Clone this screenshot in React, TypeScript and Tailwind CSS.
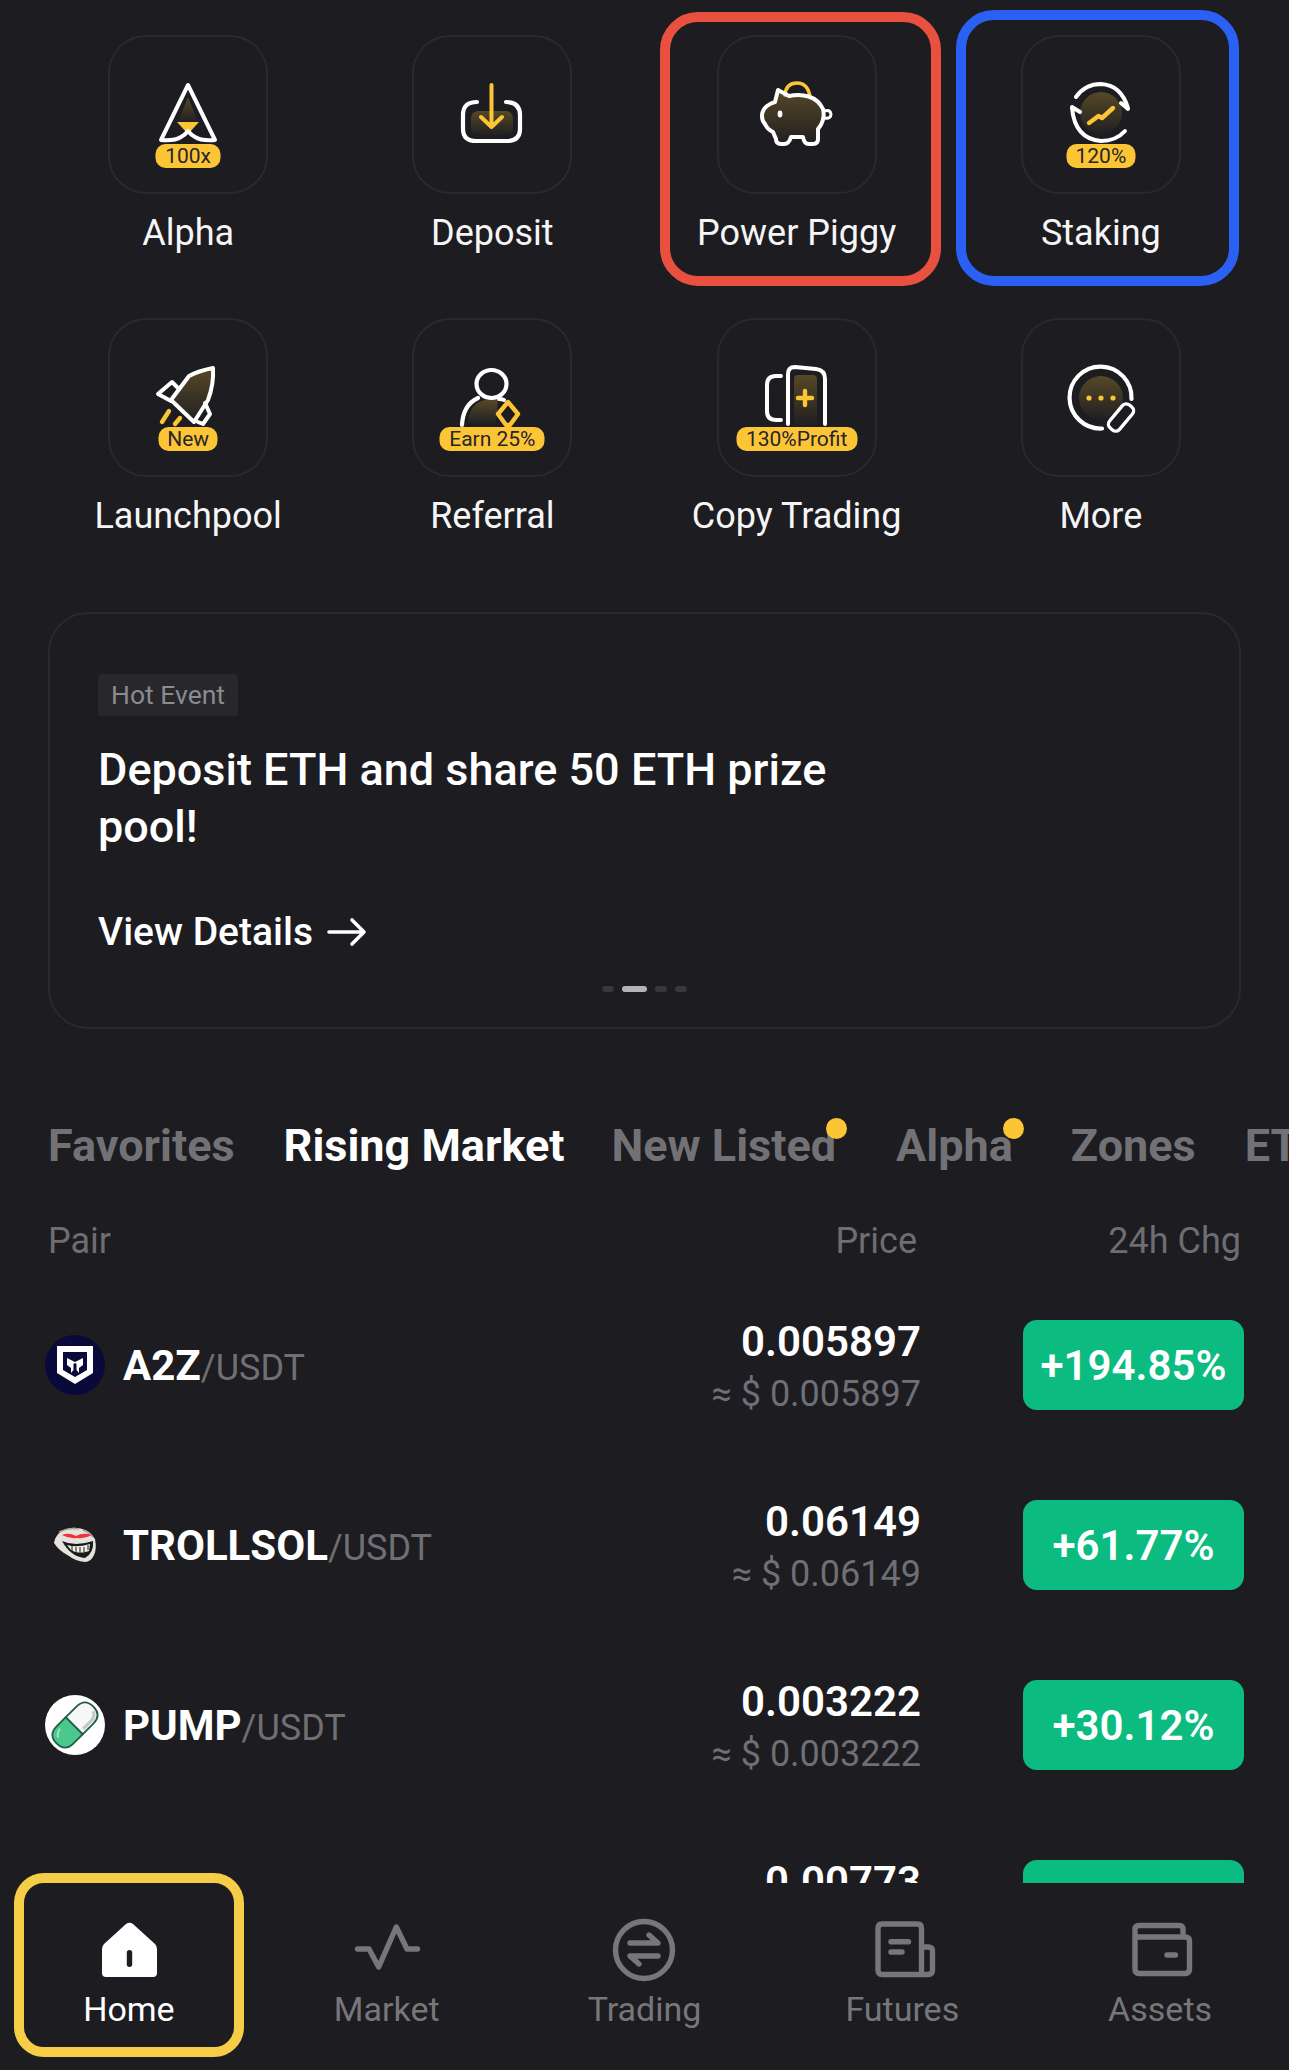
import React from 'react';

const YELLOW = '#fcc536';

const glow = (id: string) => (
  <defs>
    <linearGradient id={id} x1="0" y1="0" x2="0" y2="1">
      <stop offset="0%" stopColor="#fcc536" stopOpacity={0.26} />
      <stop offset="100%" stopColor="#fcc536" stopOpacity={0.02} />
    </linearGradient>
  </defs>
);

const Icon: React.FC<{ children: React.ReactNode }> = ({ children }) => (
  <svg viewBox="0 0 80 80" fill="none" strokeLinecap="round" strokeLinejoin="round" className="w-[80px] h-[80px]">
    {children}
  </svg>
);

const AlphaIcon = () => (
  <Icon>
    {glow('g-alpha')}
    <path d="M40 22 L30 47 H50 Z" fill="url(#g-alpha)" />
    <path d="M29 47 H51 L41 58 H39 Z" fill={YELLOW} />
    <path d="M40 10 L13 65 Q27 66 33 62 Q37 60 40 56 Q43 60 47 62 Q53 66 67 65 Z" stroke="#fff" strokeWidth={4} />
  </Icon>
);

const DepositIcon = () => (
  <Icon>
    {glow('g-dep')}
    <rect x="19" y="36" width="42" height="24" rx="7" fill="url(#g-dep)" />
    <path d="M25 27 Q11 27 11 40 V54 Q11 66 24 66 H55 Q68 66 68 54 V40 Q68 27 54 27" stroke="#fff" strokeWidth={4.2} />
    <path d="M39.5 10 V52 M29 42 L39.5 52 L50 42" stroke={YELLOW} strokeWidth={4} />
  </Icon>
);

const PiggyIcon = () => (
  <Icon>
    {glow('g-pig')}
    <path d="M28 20 Q29 8 40 8 Q51 8 53 22" stroke={YELLOW} strokeWidth={3.6} />
    <path d="M21 15 L32 21 C45 18 60 21 66 34 C68 42 65 50 61 54 V64 Q61 69 56 69 H52 Q47 69 46 62 H34 Q32 69 27 69 H24 Q19 69 19 64 L16 57 Q10 54 8 49 Q5 46 5 41 Q5 35 10 31 Q14 28 18 27 Z" fill="url(#g-pig)" stroke="#fff" strokeWidth={4} />
    <path d="M67 36 Q73 34 74 39 Q74 44 68 43" stroke="#fff" strokeWidth={3} />
    <ellipse cx="23" cy="39" rx="2.4" ry="3.4" fill="#fff" />
  </Icon>
);

const StakingIcon = () => (
  <Icon>
    {glow('g-stk')}
    <circle cx="40" cy="38" r="21" fill="url(#g-stk)" />
    <path d="M15 22 Q24 9 40 9 Q60 10 67 33 M67 34 L60 28" stroke="#fff" strokeWidth={4} />
    <path d="M64 56 Q55 66 40 66 Q14 64 11 33 M11 32 L19 37" stroke="#fff" strokeWidth={4} />
    <path d="M28 48 L37.5 41 L41 43 L52 33" stroke={YELLOW} strokeWidth={4.4} />
  </Icon>
);

const RocketIcon = () => (
  <Icon>
    {glow('g-rkt')}
    <path d="M65 10 L40 18 L23 42 L46 65 L60 41 Z" fill="url(#g-rkt)" />
    <path d="M65 10 Q50 13 41 18 L23 42 L46 64 L60 42 Q66 26 65 10 Z" stroke="#fff" strokeWidth={4} />
    <path d="M31 31 L24 24 L10 36 L23 43" stroke="#fff" strokeWidth={4} />
    <path d="M57 45 L62 56 L55 66 L50 64" stroke="#fff" strokeWidth={4} />
    <path d="M21 53 L14 64 M32 60 L27 66" stroke={YELLOW} strokeWidth={4.4} />
  </Icon>
);

const ReferralIcon = () => (
  <Icon>
    {glow('g-ref')}
    <path d="M16 66 Q17 44 34 42 H46 L44 66 Z" fill="url(#g-ref)" />
    <ellipse cx="39.5" cy="26" rx="15" ry="14" stroke="#fff" strokeWidth={4.2} />
    <path d="M10 67 Q11 47 26 40" stroke="#fff" strokeWidth={4.2} />
    <path d="M47 41 Q50 41 52 42" stroke="#fff" strokeWidth={4} />
    <path d="M56 44 L66 56 L58 67 H54 L46 56 Z" stroke={YELLOW} strokeWidth={4.4} fill="#1c1c21" />
  </Icon>
);

const CopyIcon = () => (
  <Icon>
    {glow('g-cpy')}
    <rect x="37" y="17" width="23" height="50" rx="4" fill="url(#g-cpy)" />
    <path d="M24 18 H19 Q10 18 10 27 V53 Q10 62 19 62 H24" stroke="#fff" strokeWidth={4} />
    <path d="M31 66 V16 Q31 9 38 9 L59 11 Q68 12 68 21 V66" stroke="#fff" strokeWidth={4} />
    <path d="M48 33 V47 M41 40 H55" stroke={YELLOW} strokeWidth={4.4} />
  </Icon>
);

const MoreIcon = () => (
  <Icon>
    {glow('g-more')}
    <circle cx="40" cy="40" r="22" fill="url(#g-more)" />
    <path d="M70.5 41 A31 31 0 1 0 41 70.5" stroke="#fff" strokeWidth={4.2} />
    <circle cx="28" cy="40" r="2.6" fill={YELLOW} />
    <circle cx="40" cy="40" r="2.6" fill={YELLOW} />
    <circle cx="52" cy="40" r="2.6" fill={YELLOW} />
    <rect x="45" y="53" width="30" height="13" rx="5" transform="rotate(-50 60 59.5)" fill="#1c1c21" stroke="#fff" strokeWidth={3.4} />
  </Icon>
);

const tiles = [
  { label: 'Alpha', icon: <AlphaIcon />, badge: '100x', badgeW: 'w-[65px]' },
  { label: 'Deposit', icon: <DepositIcon /> },
  { label: 'Power Piggy', icon: <PiggyIcon />, ring: 'red' },
  { label: 'Staking', icon: <StakingIcon />, badge: '120%', badgeW: 'w-[69px]', ring: 'blue' },
  { label: 'Launchpool', icon: <RocketIcon />, badge: 'New', badgeW: 'w-[59px]' },
  { label: 'Referral', icon: <ReferralIcon />, badge: 'Earn 25%', badgeW: 'w-[105px]' },
  { label: 'Copy Trading', icon: <CopyIcon />, badge: '130%Profit', badgeW: 'w-[121px]' },
  { label: 'More', icon: <MoreIcon /> },
];

const A2zLogo = () => (
  <svg viewBox="0 0 60 60" className="w-[60px] h-[60px] shrink-0">
    <circle cx="30" cy="30" r="30" fill="#0a0a3a" />
    <path d="M12 11 H48 V38 L30 49 L12 38 Z" fill="#fff" />
    <path d="M18 17 H42 V35 L30 42 L18 35 Z" fill="#0a0a3a" />
    <path d="M22 23 L30 27 L38 23 V30 L34 33 V38 L31.5 35 V29 L30 28 L28.5 29 V35 L26 38 V33 L22 30 Z" fill="#fff" />
  </svg>
);

const TrollLogo = () => (
  <svg viewBox="0 0 60 60" className="w-[60px] h-[60px] shrink-0">
    <path d="M9 28 Q11 16 25 13 Q42 11 50 24 Q52 34 49 40 Q46 47 40 47 Q30 46 24 41 Q14 36 9 28 Z" fill="#e6e3de" />
    <path d="M14 17 Q24 12 34 14 M38 15 Q44 17 48 22" stroke="#a7a39d" strokeWidth={1.4} fill="none" />
    <path d="M17 20 Q24 17 31 21 Q38 17 47 20 Q40 24 32 23 Q24 24 17 20 Z" fill="#f0323a" />
    <path d="M17 26 Q30 32 48 26 Q49 38 40 43 Q26 42 17 26 Z" fill="#1a1a1a" />
    <path d="M22 30 Q32 33 45 29 L44 36 Q33 40 26 35 Z" fill="#f2f0ec" />
    <path d="M27 31 V36 M31 32 V38 M35 32 V38 M39 32 V37 M43 30 V35" stroke="#1a1a1a" strokeWidth={1} />
  </svg>
);

const PumpLogo = () => (
  <svg viewBox="0 0 60 60" className="w-[60px] h-[60px] shrink-0">
    <circle cx="30" cy="30" r="30" fill="#fff" />
    <g transform="rotate(-45 30 30)">
      <path d="M29 18 H16 Q4 18 4 30 Q4 42 16 42 H29 Z" fill="#4cc78d" stroke="#1f5f4a" strokeWidth={1.8} />
      <path d="M29 18 H44 Q56 18 56 30 Q56 42 44 42 H29 Z" fill="#f6f7f6" stroke="#1f5f4a" strokeWidth={1.8} />
      <path d="M33 38.5 H45 Q51 38 52.5 33" stroke="#c2cac5" strokeWidth={3.2} fill="none" />
      <path d="M9 27 Q11 23 17 22" stroke="#a8e8c8" strokeWidth={1.6} fill="none" />
    </g>
  </svg>
);

const rows = [
  { symbol: 'A2Z', logo: <A2zLogo />, price: '0.005897', change: '+194.85%' },
  { symbol: 'TROLLSOL', logo: <TrollLogo />, price: '0.06149', change: '+61.77%' },
  { symbol: 'PUMP', logo: <PumpLogo />, price: '0.003222', change: '+30.12%' },
];

const navStroke = { fill: 'none', stroke: '#77777b', strokeWidth: 5.4, strokeLinecap: 'round', strokeLinejoin: 'round' } as const;

const NavSvg: React.FC<{ children: React.ReactNode }> = ({ children }) => (
  <svg viewBox="0 0 72 72" className="w-[72px] h-[72px]">{children}</svg>
);

const navItems = [
  {
    label: 'Home',
    icon: (
      <NavSvg>
        <path d="M33 10 L11 30 Q9 32 9 35 V59 Q9 63 13 63 H60 Q64 63 64 59 V35 Q64 32 62 30 L40 10 Q36.5 7.5 33 10 Z" fill="#fff" />
        <rect x="33.8" y="36" width="5.4" height="17" rx="2.7" fill="#1c1c21" />
      </NavSvg>
    ),
  },
  {
    label: 'Market',
    icon: (
      <NavSvg>
        <path d="M6.5 35 H18 L27.7 53 L45.3 13 L56 35 H66.5" {...navStroke} />
      </NavSvg>
    ),
  },
  {
    label: 'Trading',
    icon: (
      <NavSvg>
        <circle cx="36" cy="36" r="28.5" {...navStroke} />
        <path d="M22 29 H50 L41 21 M50 42 H22 L31 50" {...navStroke} />
      </NavSvg>
    ),
  },
  {
    label: 'Futures',
    icon: (
      <NavSvg>
        <path d="M56 33 H62 Q66.5 33 66.5 37 V56 Q66.5 60.5 62 60.5 H16 Q12 60.5 12 56 V14.5 Q12 10 16 10 H51.5 Q55.5 10 55.5 14.5 V60" {...navStroke} />
        <path d="M25 27.7 H42.5 M25 38 H36" {...navStroke} />
      </NavSvg>
    ),
  },
  {
    label: 'Assets',
    icon: (
      <NavSvg>
        <path d="M11 23 V15.5 Q11 11.5 15 11.5 H55 Q59 11.5 59 15.5 V23 H61 Q65.5 23 65.5 27 V55 Q65.5 59.5 61 59.5 H15 Q11 59.5 11 55 V23 H59" {...navStroke} />
        <path d="M43 41 H51.5" {...navStroke} />
      </NavSvg>
    ),
  },
];

export default function App() {
  return (
    <div className="w-[1289px] h-[2070px] flex flex-col overflow-hidden bg-[#1c1c21] text-white [font-family:Roboto,sans-serif]">
      <div className="flex-1 min-h-0 overflow-hidden">
        {/* Shortcuts */}
        <div className="grid grid-cols-4 px-[36px] pt-[35px]">
          {tiles.map((t) => (
            <div key={t.label} className="relative h-[283px] flex flex-col items-center">
              <div className="relative w-[160px] h-[159px] rounded-[38px] border-2 border-[#29292e] flex items-center justify-center">
                {t.icon}
                {t.badge && (
                  <span className={`absolute left-1/2 -translate-x-1/2 top-[107px] h-[24px] rounded-[10px] bg-[#fcc536] text-[#26262a] text-[21px] leading-[24px] text-center whitespace-nowrap ${t.badgeW}`}>
                    {t.badge}
                  </span>
                )}
              </div>
              <p className="mt-[17px] text-[36px] leading-[44px] whitespace-nowrap text-[#f5f5f6]">{t.label}</p>
              {t.ring === 'red' && (
                <div className="absolute left-[15px] top-[-23px] w-[281px] h-[274px] rounded-[38px] border-[10px] border-[#e8503f]" />
              )}
              {t.ring === 'blue' && (
                <div className="absolute left-[7px] top-[-25px] w-[283px] h-[276px] rounded-[38px] border-[10px] border-[#2b60f5]" />
              )}
            </div>
          ))}
        </div>

        {/* Event card */}
        <div className="mx-[48px] mt-[11px] h-[417px] rounded-[40px] border-2 border-[#29292e] px-[48px] pt-[60px]">
          <span className="inline-block h-[42px] px-[13px] rounded-[4px] bg-[#27272c] text-[26.5px] leading-[42px] text-[#8b8b90] align-top">Hot Event</span>
          <p className="mt-[25px] w-[780px] text-[45px] leading-[57px] font-medium">Deposit ETH and share 50 ETH prize pool!</p>
          <div className="mt-[54px] h-[46px] flex items-center gap-[14px] text-[39px] font-medium">
            View Details
            <svg viewBox="0 0 40 30" fill="none" stroke="#fff" strokeWidth={3.6} strokeLinecap="round" strokeLinejoin="round" className="w-[40px] h-[30px]">
              <path d="M2 15 H37 M25 3 L37 15 L25 27" />
            </svg>
          </div>
          <div className="mt-[31px] flex justify-center gap-[8px] items-center">
            <span className="w-[12px] h-[6px] rounded-full bg-[#37373c]" />
            <span className="w-[25px] h-[6px] rounded-full bg-[#b4b4b6]" />
            <span className="w-[12px] h-[6px] rounded-full bg-[#37373c]" />
            <span className="w-[12px] h-[6px] rounded-full bg-[#37373c]" />
          </div>
        </div>

        {/* Tabs */}
        <div className="mt-[88px] h-[58px] flex items-center pl-[48px] overflow-hidden whitespace-nowrap text-[45px] font-bold text-[#727276]">
          <span>Favorites</span>
          <span className="ml-[49px] text-white">Rising Market</span>
          <span className="ml-[47px] relative">
            New Listed
            <i className="absolute right-[-11px] top-[6px] w-[21px] h-[21px] rounded-full bg-[#fcc536]" />
          </span>
          <span className="ml-[60px] relative">
            Alpha
            <i className="absolute right-[-11px] top-[6px] w-[21px] h-[21px] rounded-full bg-[#fcc536]" />
          </span>
          <span className="ml-[58px]">Zones</span>
          <span className="ml-[49px]">ETF</span>
        </div>

        {/* Table header */}
        <div className="mt-[44px] h-[44px] flex items-center pl-[48px] pr-[48px] text-[36px] text-[#6d6d72]">
          <span className="flex-1">Pair</span>
          <span>Price</span>
          <span className="w-[324px] text-right">24h Chg</span>
        </div>

        {/* Rows */}
        <div className="mt-[12px]">
          {rows.map((r) => (
            <div key={r.symbol} className="h-[180px] flex items-center pl-[45px] pr-[45px]">
              <div className="flex-1 flex items-center gap-[18px]">
                {r.logo}
                <p className="text-[42px] font-bold whitespace-nowrap">
                  {r.symbol}
                  <span className="text-[36px] font-normal text-[#6f6f74]">/USDT</span>
                </p>
              </div>
              <div className="text-right pt-[5px]">
                <p className="text-[42px] leading-[53px] font-semibold">{r.price}</p>
                <p className="text-[36px] leading-[53px] text-[#6f6f74]">≈ $ {r.price}</p>
              </div>
              <div className="ml-[102px] w-[221px] h-[90px] rounded-[14px] bg-[#0cbb7f] flex items-center justify-center text-[42px] font-semibold">
                {r.change}
              </div>
            </div>
          ))}
          <div className="h-[180px] flex items-center pl-[45px] pr-[45px]">
            <div className="flex-1" />
            <div className="text-right pt-[5px]">
              <p className="text-[42px] leading-[53px] font-semibold">0.00773</p>
              <p className="h-[53px]" />
            </div>
            <div className="ml-[102px] w-[221px] h-[90px] rounded-[14px] bg-[#0cbb7f]" />
          </div>
        </div>
      </div>

      {/* Bottom nav */}
      <div className="relative z-10 h-[187px] shrink-0 grid grid-cols-5 bg-[#1c1c21] pt-[31px]">
        {navItems.map((n, i) => (
          <div key={n.label} className="relative flex flex-col items-center">
            {n.icon}
            <span className={`text-[34px] leading-[46px] ${i === 0 ? 'text-white' : 'text-[#77777b]'}`}>{n.label}</span>
            {i === 0 && (
              <div className="absolute left-[14px] top-[-41px] w-[230px] h-[184px] rounded-[30px] border-[10px] border-[#f5cd47]" />
            )}
          </div>
        ))}
      </div>
    </div>
  );
}
